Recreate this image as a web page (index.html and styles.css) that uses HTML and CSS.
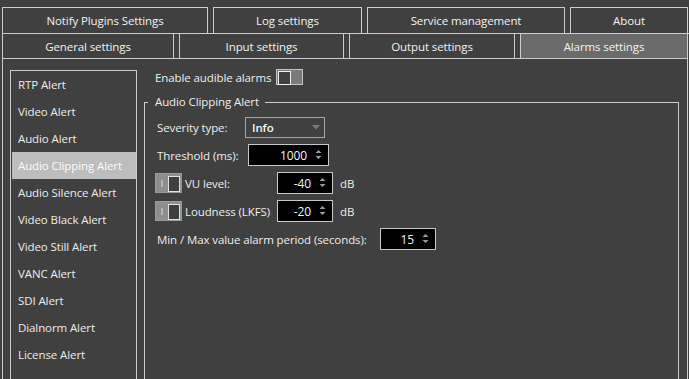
FILE: index.html
```html
<!DOCTYPE html>
<html lang="en">
<head>
    <meta charset="UTF-8">
    <link rel="stylesheet" href="styles.css">
    <title>Alarms settings</title>
</head>
<body>
    <div class="tabs">
        <div class="tab-row top">
            <div class="tab w-notify">Notify Plugins Settings</div>
            <div class="tab w-log">Log settings</div>
            <div class="tab w-service">Service management</div>
            <div class="tab w-about">About</div>
        </div>
        <div class="tab-row bottom">
            <div class="tab w-general">General settings</div>
            <div class="tab w-input">Input settings</div>
            <div class="tab w-output">Output settings</div>
            <div class="tab w-alarms active">Alarms settings</div>
        </div>
    </div>

    <div class="pane">
        <ul class="alert-list">
            <li>RTP Alert</li>
            <li>Video Alert</li>
            <li>Audio Alert</li>
            <li class="selected">Audio Clipping Alert</li>
            <li>Audio Silence Alert</li>
            <li>Video Black Alert</li>
            <li>Video Still Alert</li>
            <li>VANC Alert</li>
            <li>SDI Alert</li>
            <li>Dialnorm Alert</li>
            <li>License Alert</li>
        </ul>

        <div class="alarm-panel">
            <div class="enable-row">
                <span>Enable audible alarms</span>
                <span class="toggle"></span>
            </div>

            <fieldset class="group">
                <legend>Audio Clipping Alert</legend>

                <div class="row">
                    <span class="lbl lbl-sev">Severity type:</span>
                    <div class="combo">
                        <span>Info</span>
                        <svg class="combo-arrow" width="8" height="5" viewBox="0 0 8 5"><polygon points="0,0 8,0 4,4.5" fill="#7c7c7c"/></svg>
                    </div>
                </div>

                <div class="row">
                    <span class="lbl lbl-thr">Threshold (ms):</span>
                    <div class="spin w-thr">
                        <span>1000</span>
                        <svg class="spin-arrows" width="7" height="11" viewBox="0 0 7 11"><polygon points="0.5,4 3.5,1 6.5,4" fill="#9c9c9c"/><polygon points="0.5,7 3.5,10 6.5,7" fill="#9c9c9c"/></svg>
                    </div>
                </div>

                <div class="row">
                    <span class="switch"></span>
                    <span class="lbl lbl-level">VU level:</span>
                    <div class="spin w-small">
                        <span>-40</span>
                        <svg class="spin-arrows" width="7" height="11" viewBox="0 0 7 11"><polygon points="0.5,4 3.5,1 6.5,4" fill="#9c9c9c"/><polygon points="0.5,7 3.5,10 6.5,7" fill="#9c9c9c"/></svg>
                    </div>
                    <span class="unit">dB</span>
                </div>

                <div class="row">
                    <span class="switch"></span>
                    <span class="lbl lbl-level">Loudness (LKFS)</span>
                    <div class="spin w-small">
                        <span>-20</span>
                        <svg class="spin-arrows" width="7" height="11" viewBox="0 0 7 11"><polygon points="0.5,4 3.5,1 6.5,4" fill="#9c9c9c"/><polygon points="0.5,7 3.5,10 6.5,7" fill="#9c9c9c"/></svg>
                    </div>
                    <span class="unit">dB</span>
                </div>

                <div class="row">
                    <span class="lbl lbl-period">Min / Max value alarm period (seconds):</span>
                    <div class="spin w-small">
                        <span>15</span>
                        <svg class="spin-arrows" width="7" height="11" viewBox="0 0 7 11"><polygon points="0.5,4 3.5,1 6.5,4" fill="#9c9c9c"/><polygon points="0.5,7 3.5,10 6.5,7" fill="#9c9c9c"/></svg>
                    </div>
                </div>
            </fieldset>
        </div>
    </div>
</body>
</html>
```

FILE: styles.css
```css
* {
    box-sizing: border-box;
}

body {
    margin: 0;
    height: 379px;
    overflow: hidden;
    background-color: #404040;
    color: #ededed;
    font-family: 'Open Sans', 'Noto Sans', sans-serif;
    font-size: 11.5px;
    letter-spacing: -0.1px;
}

/* tab bar */

.tabs {
    padding-top: 7px;
}

.tab-row {
    display: flex;
    gap: 5px;
    padding-left: 2px;
}

.tab-row.bottom {
    margin-left: 2px;
    padding-left: 0;
    border-top: 1px solid #cccccc;
}

.tab {
    display: flex;
    align-items: center;
    justify-content: center;
    border: 1px solid #cccccc;
    color: #f2f2f2;
}

.tab-row.top .tab {
    height: 26px;
    border-bottom: none;
}

.tab-row.bottom .tab {
    height: 24px;
    border-top: none;
    border-bottom: none;
}

.tab.active {
    background-color: #6b6b6b;
}

.w-notify { width: 206px; }
.w-log { width: 149px; }
.w-service { width: 198px; }
.w-about { width: 118px; }
.w-general { width: 172px; }
.w-input { width: 165px; }
.w-output { width: 166px; }
.w-alarms { width: 168px; }

/* main pane */

.pane {
    display: flex;
    margin: 0 1px 0 2px;
    height: 321px;
    padding: 11px 8px 0 7px;
    border: 1px solid #cccccc;
    border-bottom: none;
}

.alert-list {
    width: 127px;
    margin: 0;
    padding: 0 0 0 1px;
    list-style: none;
    border: 1px solid #cccccc;
    border-bottom: none;
}

.alert-list li {
    height: 27px;
    line-height: 27px;
    padding-left: 6px;
    color: #ececec;
    white-space: nowrap;
}

.alert-list li.selected {
    background-color: #bdbdbd;
    color: #fafafa;
}

.alarm-panel {
    display: flex;
    flex-direction: column;
    flex: 1;
    margin-left: 7px;
}

.enable-row {
    display: flex;
    align-items: center;
    gap: 5px;
    height: 16px;
    margin-top: -1px;
    padding-left: 11px;
}

.toggle {
    position: relative;
    width: 27px;
    height: 16px;
    border: 1px solid #c4c4c4;
    background-color: #7a7a7a;
}

.toggle::after {
    content: '';
    position: absolute;
    left: 1px;
    top: 1px;
    width: 11px;
    height: 12px;
    border: 1px solid #f0f0f0;
    background-color: #404040;
}

/* group box */

.group {
    flex: 1;
    min-width: 0;
    margin: 9px 0 0 0;
    padding: 6px 0 0 12px;
    border: 1px solid #cccccc;
    border-bottom: none;
    display: flex;
    flex-direction: column;
    gap: 6px;
}

.group legend {
    margin-left: -9px;
    padding: 0 6px 0 7px;
    line-height: 16px;
}

.row {
    display: flex;
    align-items: center;
    height: 22px;
}

.lbl {
    white-space: nowrap;
}

.lbl-sev { width: 88px; }
.lbl-thr { width: 91px; }
.lbl-level { width: 92px; margin-left: 3px; }
.lbl-period { width: 223px; }

.combo {
    position: relative;
    display: flex;
    align-items: center;
    width: 80px;
    height: 21px;
    padding-left: 6px;
    border: 1px solid #a4a4a4;
    font-weight: 600;
    color: #f4f4f4;
}

.combo-arrow {
    position: absolute;
    right: 4px;
    top: 7px;
}

.spin {
    position: relative;
    display: flex;
    align-items: center;
    justify-content: flex-end;
    height: 22px;
    padding-right: 21px;
    border: 1px solid #c8c8c8;
    background-color: #000000;
    color: #f4f4f4;
    font-size: 12px;
}

.spin-arrows {
    position: absolute;
    right: 6px;
    top: 4px;
}

.w-thr { width: 81px; }
.w-small { width: 56px; }

.unit {
    margin-left: 7px;
}

.switch {
    position: relative;
    width: 27px;
    height: 20px;
    margin-left: -2px;
    background-color: #8e8e8e;
    border: 1px solid #9a9a9a;
}

.switch::before {
    content: '';
    position: absolute;
    left: 5px;
    top: 6px;
    width: 2px;
    height: 7px;
    background-color: #b4b4b4;
}

.switch::after {
    content: '';
    position: absolute;
    right: 1px;
    top: 2px;
    width: 10px;
    height: 14px;
    border: 1px solid #e2e2e2;
    background-color: #3e3e3e;
}
```
